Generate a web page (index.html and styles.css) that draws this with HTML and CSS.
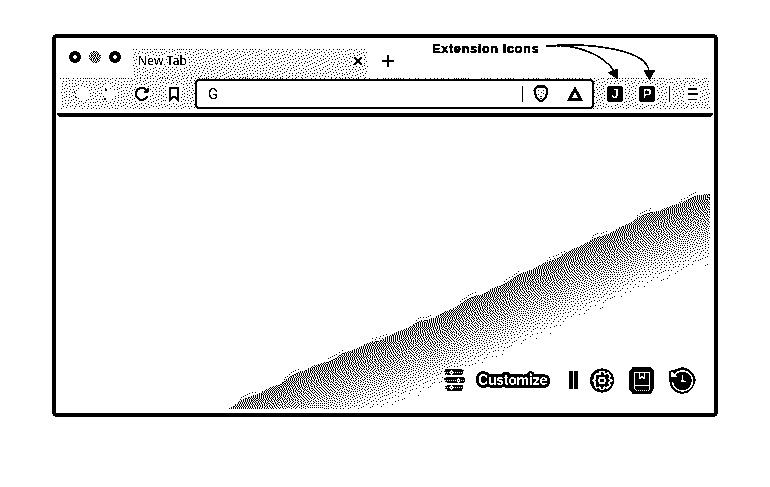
FILE: index.html
```
<!DOCTYPE html>
<html lang="en">
<head>
<meta charset="utf-8">
<title>New Tab</title>
<link rel="stylesheet" href="styles.css">
</head>
<body>
<svg class="defs" width="0" height="0" aria-hidden="true"><filter id="ink" x="0" y="0" width="100%" height="100%" color-interpolation-filters="sRGB"><feColorMatrix type="saturate" values="0"/><feComponentTransfer><feFuncR type="discrete" tableValues="0 0 0 1 1"/><feFuncG type="discrete" tableValues="0 0 0 1 1"/><feFuncB type="discrete" tableValues="0 0 0 1 1"/></feComponentTransfer></filter></svg>
<main class="page">
  <section class="window">
    <header class="tabs">
      <div class="dots">
        <i class="dot"></i>
        <canvas class="dot-gray" width="12" height="12" data-tone="circle"></canvas>
        <i class="dot"></i>
      </div>
      <div class="tab">
        <canvas class="shade" width="236" height="29" data-tone="flat"></canvas>
        <span class="tab-title">New Tab</span>
        <svg class="close" width="16" height="16" viewBox="0 0 16 16"><path class="halo" d="M4.5 4.5l7 7m0-7l-7 7"/><path class="line heavy" d="M4.5 4.5l7 7m0-7l-7 7"/></svg>
      </div>
      <svg class="plus" width="12" height="12" viewBox="0 0 12 12"><path class="line" d="M6 0v12M0 6h12"/></svg>
    </header>
    <nav class="toolbar">
      <canvas class="shade" width="650" height="31" data-tone="flat"></canvas>
      <svg width="32" height="31" viewBox="0 0 32 31"><path fill="#fff" d="M13 16l6-8 7 2v12l-7 1z"/><path class="thin" d="M12 14l2 2M13 18l2 2"/></svg>
      <svg width="32" height="31" viewBox="0 0 32 31"><path fill="#fff" d="M10 10l5-4 7 7v4l-7 8-5-4z"/><path class="thin" d="M11 11h1v2M11 20v2M16 10l1 1"/></svg>
      <svg width="32" height="31" viewBox="0 0 32 31"><circle cx="16" cy="16" r="9" fill="#fff"/><path class="line" d="M20 11.500a6 6 0 1 0 1.500 6.500"/><path d="M22.500 9.500v5h-5z"/></svg>
      <svg width="32" height="31" viewBox="0 0 32 31"><path fill="#fff" d="M9 7h14v18H9z"/><path class="line" d="M12 10h8v12l-4-3.500-4 3.500z"/></svg>
      <div class="address">
        <span class="engine">G</span>
        <i class="rule"></i>
        <svg class="shield" width="16" height="18" viewBox="0 0 16 18"><path class="line" d="M4 1.500h8L14.500 5 13 12l-5 4.500L3 12 1.500 5z"/><path class="thin" d="M5 5.500h1M10 5.500h1M8 7.500h1M5 9.500h1M7 11.500h2M10 8.500h1M8 13v1"/></svg>
        <svg class="prism" width="18" height="18" viewBox="0 0 18 18"><path fill-rule="evenodd" d="M9 1l8 15H1zM9 7l-3 6h6z"/></svg>
      </div>
      <div class="ext"><b>J</b></div>
      <div class="ext"><b>P</b></div>
      <i class="rule split"></i>
      <svg width="34" height="31" viewBox="0 0 34 31"><path fill="#fff" d="M10 8h15v16H10z"/><path shape-rendering="crispEdges" d="M13 10h9v2h-9zM13 15h10v2H13zM13 21h9v1h-9z"/></svg>
    </nav>
    <div class="divider"></div>
    <div class="content">
      <canvas class="wallpaper" width="650" height="292" data-tone="slope"></canvas>
      <footer class="actions">
        <svg class="sliders" width="22" height="24" viewBox="0 0 22 24"><path d="M2 1h16v1h1v4h-1v1H3V6H1V2h1zM2 9h18v1h1v4h-1v1H3v-1H1v-1h1v-1H0v-2h2zM3 17h16v4h-1v2H3v-2H1v-3h2z"/><path class="wline dots-line" d="M1 4.500h20M1 12.500h20M1 19.500h20"/><g class="knob"><circle cx="7.500" cy="4.500" r="1.500"/><circle cx="14.500" cy="12.500" r="1.500"/><circle cx="7.500" cy="19.500" r="1.500"/></g></svg>
        <span class="customize">Customize</span>
        <span class="bars"><i></i><i></i></span>
        <svg class="gear" width="24" height="25" viewBox="0 0 24 25"><circle cx="12" cy="12.500" r="12"/><path class="wline" d="M10 3.500h4l1 2.500 3-1 2 3-1 2.500 2.500 2-2.500 2 1 3-3 2.500-2.500-1-1 2.500h-3l-1-2.500-3 1-2-3 1-2.500-2.500-2 2.500-2-1-3 3-2 2.500 1z"/><circle class="wline" cx="12" cy="12.500" r="3"/></svg>
        <svg class="book" width="26" height="27" viewBox="0 0 26 27"><path d="M4 0h18l3 4v17l-3 6H4l-4-5V5z"/><path class="wline fine" d="M5.500 21V6.500q0-1 1-1h14v18M5.500 18.500h15M5.500 21l1.500 2.500M10.500 5v6.500h1l1.500-2 1.500 2h1V5"/><path class="wline dash" d="M7 23.500h14"/></svg>
        <svg class="history" width="27" height="27" viewBox="0 0 27 27"><path d="M0 4l5-1 3-1 5-2 6 2 5 4 3 7-3 7-4 5-7 2-6-2-5-5-2-7z"/><path class="wline" d="M5 8.500A10 10 0 1 1 3.500 15M13.500 7.500v8M12 14.500h5"/><path fill="#fff" d="M2 4l7 6H2z"/></svg>
      </footer>
    </div>
  </section>
  <div class="note">
    <span class="note-text">Extension Icons</span>
    <svg class="arrows" width="114" height="42" viewBox="546 40 114 42"><path class="curve" d="M546 46C576 43 604 55 614 71M546 46C596 42 650 51 649 73"/><path class="smudge" d="M549 46h22"/><path d="M607.500 72.500l10-4 .5 11zM643.500 70.500h11.500l-5.500 10z"/></svg>
  </div>
</main>
<script src="script.js"></script>
</body>
</html>
```
FILE: styles.css
```
* { box-sizing: border-box; }
body { margin: 0; background: #fff; }
.defs { position: absolute; }
.page {
  position: relative;
  width: 770px;
  height: 487px;
  padding: 34px 52px;
  background: #fff;
  color: #000;
  font-family: "Noto Sans", sans-serif;
  filter: url(#ink);
}
svg { display: block; flex: none; }
canvas { display: block; flex: none; }
.window {
  width: 666px;
  height: 383px;
  border: 4px solid #000;
  border-radius: 5px;
}
.line { fill: none; stroke: #000; stroke-width: 2; }
.heavy { stroke-width: 2.2; }
.thin { fill: none; stroke: #000; stroke-width: 1; }
.halo { fill: none; stroke: #fff; stroke-width: 7; }
.wline { fill: none; stroke: #fff; stroke-width: 1.8; }
.fine { stroke-width: 1.3; }

.tabs { display: flex; height: 40px; padding-left: 13px; }
.dots { display: flex; flex: none; align-items: flex-start; gap: 8px; width: 63px; padding-top: 13px; }
.dot { flex: none; width: 12px; height: 12px; border: 4px solid #000; border-radius: 50%; }
.tab {
  position: relative;
  display: flex;
  flex: none;
  align-items: center;
  justify-content: space-between;
  width: 236px;
  height: 29px;
  margin-top: 11px;
  padding: 0 2px 5px 6px;
}
.shade { position: absolute; left: 0; top: 0; }
.tab-title {
  position: relative;
  font-size: 12px;
  line-height: 16px;
  letter-spacing: .15px;
  -webkit-text-stroke: 4px #fff;
  paint-order: stroke fill;
}
.close { position: relative; }
.plus { margin: 17px 0 0 14px; }

.toolbar {
  position: relative;
  display: flex;
  align-items: center;
  height: 31px;
  margin: 0 4px;
  padding-left: 2px;
}
.toolbar > svg { position: relative; }
.address {
  position: relative;
  display: flex;
  flex: none;
  align-items: center;
  width: 399px;
  height: 30px;
  margin: 0 5px;
  padding-left: 11px;
  border: 2px solid #000;
  border-radius: 4px;
  background: #fff;
}
.engine { width: 314px; font: 15px/20px Roboto, sans-serif; }
.rule { width: 1px; height: 16px; background: #000; }
.shield { margin-left: 10px; }
.prism { margin-left: 17px; }
.ext { position: relative; width: 32px; padding: 0 6px; }
.ext b {
  display: block;
  width: 20px;
  height: 20px;
  border: 2px solid #fff;
  border-radius: 4px;
  background: #000;
  color: #fff;
  font: bold 13px/16px "Liberation Sans", sans-serif;
  text-align: center;
}
.split { position: relative; margin: 0 5px 0 6px; box-shadow: 0 0 0 2px #fff; }
.divider { height: 4px; margin: 4px 1px 0; background: #000; border-radius: 0 0 4px 4px; }

.content { position: relative; display: grid; height: 296px; padding: 0 4px; }
.wallpaper { grid-area: 1 / 1; }
.actions {
  grid-area: 1 / 1;
  align-self: end;
  justify-self: end;
  position: relative;
  display: flex;
  align-items: center;
  height: 28px;
  margin: 0 14px 19px 0;
}
.dots-line { stroke-dasharray: 1 1; stroke-width: 1; }
.knob circle { fill: #000; stroke: #fff; stroke-width: 1.3; }
.customize {
  width: 75px;
  margin-left: 10px;
  padding-left: 2px;
  color: #fff;
  font: 700 14px/20px Inter, sans-serif;
  letter-spacing: -.4px;
  -webkit-text-stroke: 5.5px #000;
  paint-order: stroke fill;
}
.bars { display: flex; gap: 1px; margin: 0 12px 0 18px; }
.bars i { width: 4px; height: 18px; background: #000; }
.book { margin-left: 15px; }
.dash { stroke-width: 1.5; stroke-dasharray: 1 1; }
.history { margin-left: 14px; }

.note { position: absolute; left: 432px; top: 40px; display: flex; }
.note-text {
  width: 114px;
  font: bold 13px/18px "Liberation Sans", sans-serif;
  letter-spacing: .5px;
  -webkit-text-stroke: .3px #000;
  white-space: nowrap;
}
.curve { fill: none; stroke: #000; stroke-width: 1.4; }
.smudge { stroke: #000; stroke-width: 2; stroke-dasharray: 3 1; }
```
FILE: script.js
```
// Vertical position of the slope's upper edge, in wallpaper pixels.
const ridge = [[165, 292], [250, 250], [370, 201], [500, 138], [593, 94], [650, 75]];

function edgeAt(x) {
  for (let i = 1; i < ridge.length; i++) {
    const [x0, y0] = ridge[i - 1];
    const [x1, y1] = ridge[i];
    if (x <= x1) return y0 + (y1 - y0) * (x - x0) / (x1 - x0);
  }
  return 75;
}

// Repeatable noise between 0 and 1.
let seed = 7;
function noise() {
  seed = (seed * 1664525 + 1013904223) % 4294967296;
  return seed / 4294967296;
}

// Each tone gives the share of ink, 0 to 1.
const tones = {
  flat: () => 0.122,
  circle: (x, y) => (Math.hypot(x - 5.5, y - 5.5) < 6 ? 0.55 : 0),
  slope: (x, y) => {
    const depth = y - edgeAt(x) + Math.sin(x / 9) * 0.8 + Math.sin(x / 4) * 0.7;
    if (depth < -6 || depth > 74) return 0;
    if (depth < 0) return Math.sin(x / 7) > 0.2 ? 0.12 : 0;
    return 0.53 * (1 - depth / 75);
  }
};

// Floyd-Steinberg error diffusion.
function dither(canvas) {
  const w = canvas.width, h = canvas.height;
  const tone = tones[canvas.dataset.tone];
  const ctx = canvas.getContext("2d");
  const image = ctx.createImageData(w, h);
  let row = Float32Array.from({ length: w + 2 }, () => noise() * 0.6 - 0.1);
  for (let y = 0; y < h; y++) {
    const next = new Float32Array(w + 2);
    for (let x = 0; x < w; x++) {
      const t = tone(x, y);
      const value = t > 0 ? t + row[x + 1] : noise() * 0.2 - 0.1;
      const ink = value > 0.5 + (noise() - 0.5) * 0.12 ? 1 : 0;
      const err = value - ink;
      row[x + 2] += err * 7 / 16;
      next[x] += err * 3 / 16;
      next[x + 1] += err * 5 / 16;
      next[x + 2] += err / 16;
      image.data[(y * w + x) * 4 + 3] = ink * 255;
    }
    row = next;
  }
  ctx.putImageData(image, 0, 0);
}

document.querySelectorAll("canvas").forEach(dither);
```
